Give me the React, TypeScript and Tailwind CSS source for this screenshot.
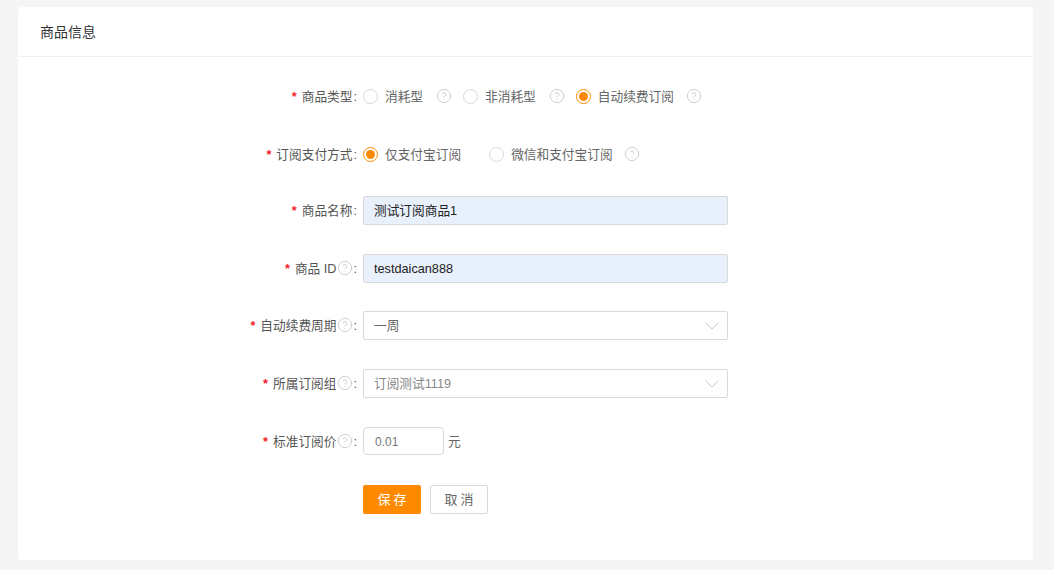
import { ChevronDown, CircleHelp } from "lucide-react";
import type { ReactNode } from "react";

const FONT = `"Liberation Sans", "Noto Sans CJK SC", sans-serif`;

function Help({ className = "" }: { className?: string }) {
  return <CircleHelp size={16} strokeWidth={1.1} className={`shrink-0 text-[#bdbdbd] ${className}`} />;
}

function Radio({ label, checked, className = "" }: { label: string; checked?: boolean; className?: string }) {
  return (
    <span className={`flex items-center ${className}`}>
      {checked ? (
        <span className="flex h-[15px] w-[15px] items-center justify-center rounded-full border border-[#ff8a00] bg-white">
          <span className="h-[9px] w-[9px] rounded-full bg-[#ff8a00]" />
        </span>
      ) : (
        <span className="h-[15px] w-[15px] rounded-full border border-[#d9d9d9] bg-white" />
      )}
      <span className="ml-[7px] pt-[2px] text-[12.7px] text-[#666]">{label}</span>
    </span>
  );
}

function Row({ label, help, children, className = "" }: { label: string; help?: boolean; children: ReactNode; className?: string }) {
  return (
    <div className={`flex h-[29px] items-center ${className}`}>
      <div className="flex w-[339px] shrink-0 items-center justify-end text-[12.7px] text-[#555]">
        <span className="mr-[5px] pt-[2px] font-bold text-[#f5222d]">*</span>
        <span className="pt-[2px]">{label}</span>
        {help ? <Help className="ml-[1px]" /> : <span className="w-px" />}
        <span className="pt-[2px]">:</span>
      </div>
      <div className="ml-[6px] flex items-center">{children}</div>
    </div>
  );
}

function TextField({ value }: { value: string }) {
  return (
    <div className="flex h-[29px] w-[365px] items-center rounded-[2px] border border-[#d9d9d9] bg-[#e8f0fb] px-[10px] pt-[2px] text-[12.7px] text-[#222]">
      {value}
    </div>
  );
}

function SelectField({ value, muted }: { value: string; muted?: boolean }) {
  return (
    <div className={`flex h-[29px] w-[365px] items-center justify-between rounded-[2px] border border-[#d9d9d9] bg-white pl-[10px] pr-[3px] text-[12.7px] ${muted ? "text-[#888]" : "text-[#666]"}`}>
      <span className="pt-[2px]">{value}</span>
      <ChevronDown size={24} strokeWidth={0.8} className="text-[#bbb]" />
    </div>
  );
}

export default function App() {
  return (
    <div className="h-[570px] w-[1054px] overflow-hidden bg-[#f5f5f5] pl-[18px] pr-[21px] pt-[7px]" style={{ fontFamily: FONT }}>
      <div className="h-[553px] rounded-[4px] bg-white">
        <div className="flex h-[50px] items-center border-b border-[#f0f0f0] pl-[22px] pt-[2px] text-[14px] text-[#333]">
          商品信息
        </div>
        <div className="flex flex-col pt-[25px]">
          <Row label="商品类型">
            <Radio label="消耗型" />
            <Help className="ml-[13px]" />
            <Radio label="非消耗型" className="ml-[11px]" />
            <Help className="ml-[13px]" />
            <Radio label="自动续费订阅" checked className="ml-[11px]" />
            <Help className="ml-[12px]" />
          </Row>
          <Row label="订阅支付方式" className="mt-[29px]">
            <Radio label="仅支付宝订阅" checked />
            <Radio label="微信和支付宝订阅" className="ml-[28px]" />
            <Help className="ml-[11px]" />
          </Row>
          <Row label="商品名称" className="mt-[27px]">
            <TextField value="测试订阅商品1" />
          </Row>
          <Row label="商品 ID" help className="mt-[29px]">
            <TextField value="testdaican888" />
          </Row>
          <Row label="自动续费周期" help className="mt-[28px]">
            <SelectField value="一周" />
          </Row>
          <Row label="所属订阅组" help className="mt-[29px]">
            <SelectField value="订阅测试1119" muted />
          </Row>
          <Row label="标准订阅价" help className="mt-[29px]">
            <div className="mb-px flex h-[28px] w-[81px] items-center rounded-[4px] border border-[#d9d9d9] px-[11px] pt-[2px] text-[12px] text-[#777]">0.01</div>
            <span className="ml-[4px] pt-[2px] text-[12.7px] text-[#666]">元</span>
          </Row>
          <div className="ml-[339px] mt-[29px] flex gap-[9px] pl-[6px] text-[13px]">
            <button type="button" className="h-[29px] w-[58px] rounded-[2px] bg-[#ff8a00] pl-[3px] tracking-[3px] text-white">保存</button>
            <button type="button" className="h-[29px] w-[58px] rounded-[2px] border border-[#d9d9d9] bg-white pl-[3px] tracking-[3px] text-[#666]">取消</button>
          </div>
        </div>
      </div>
    </div>
  );
}
